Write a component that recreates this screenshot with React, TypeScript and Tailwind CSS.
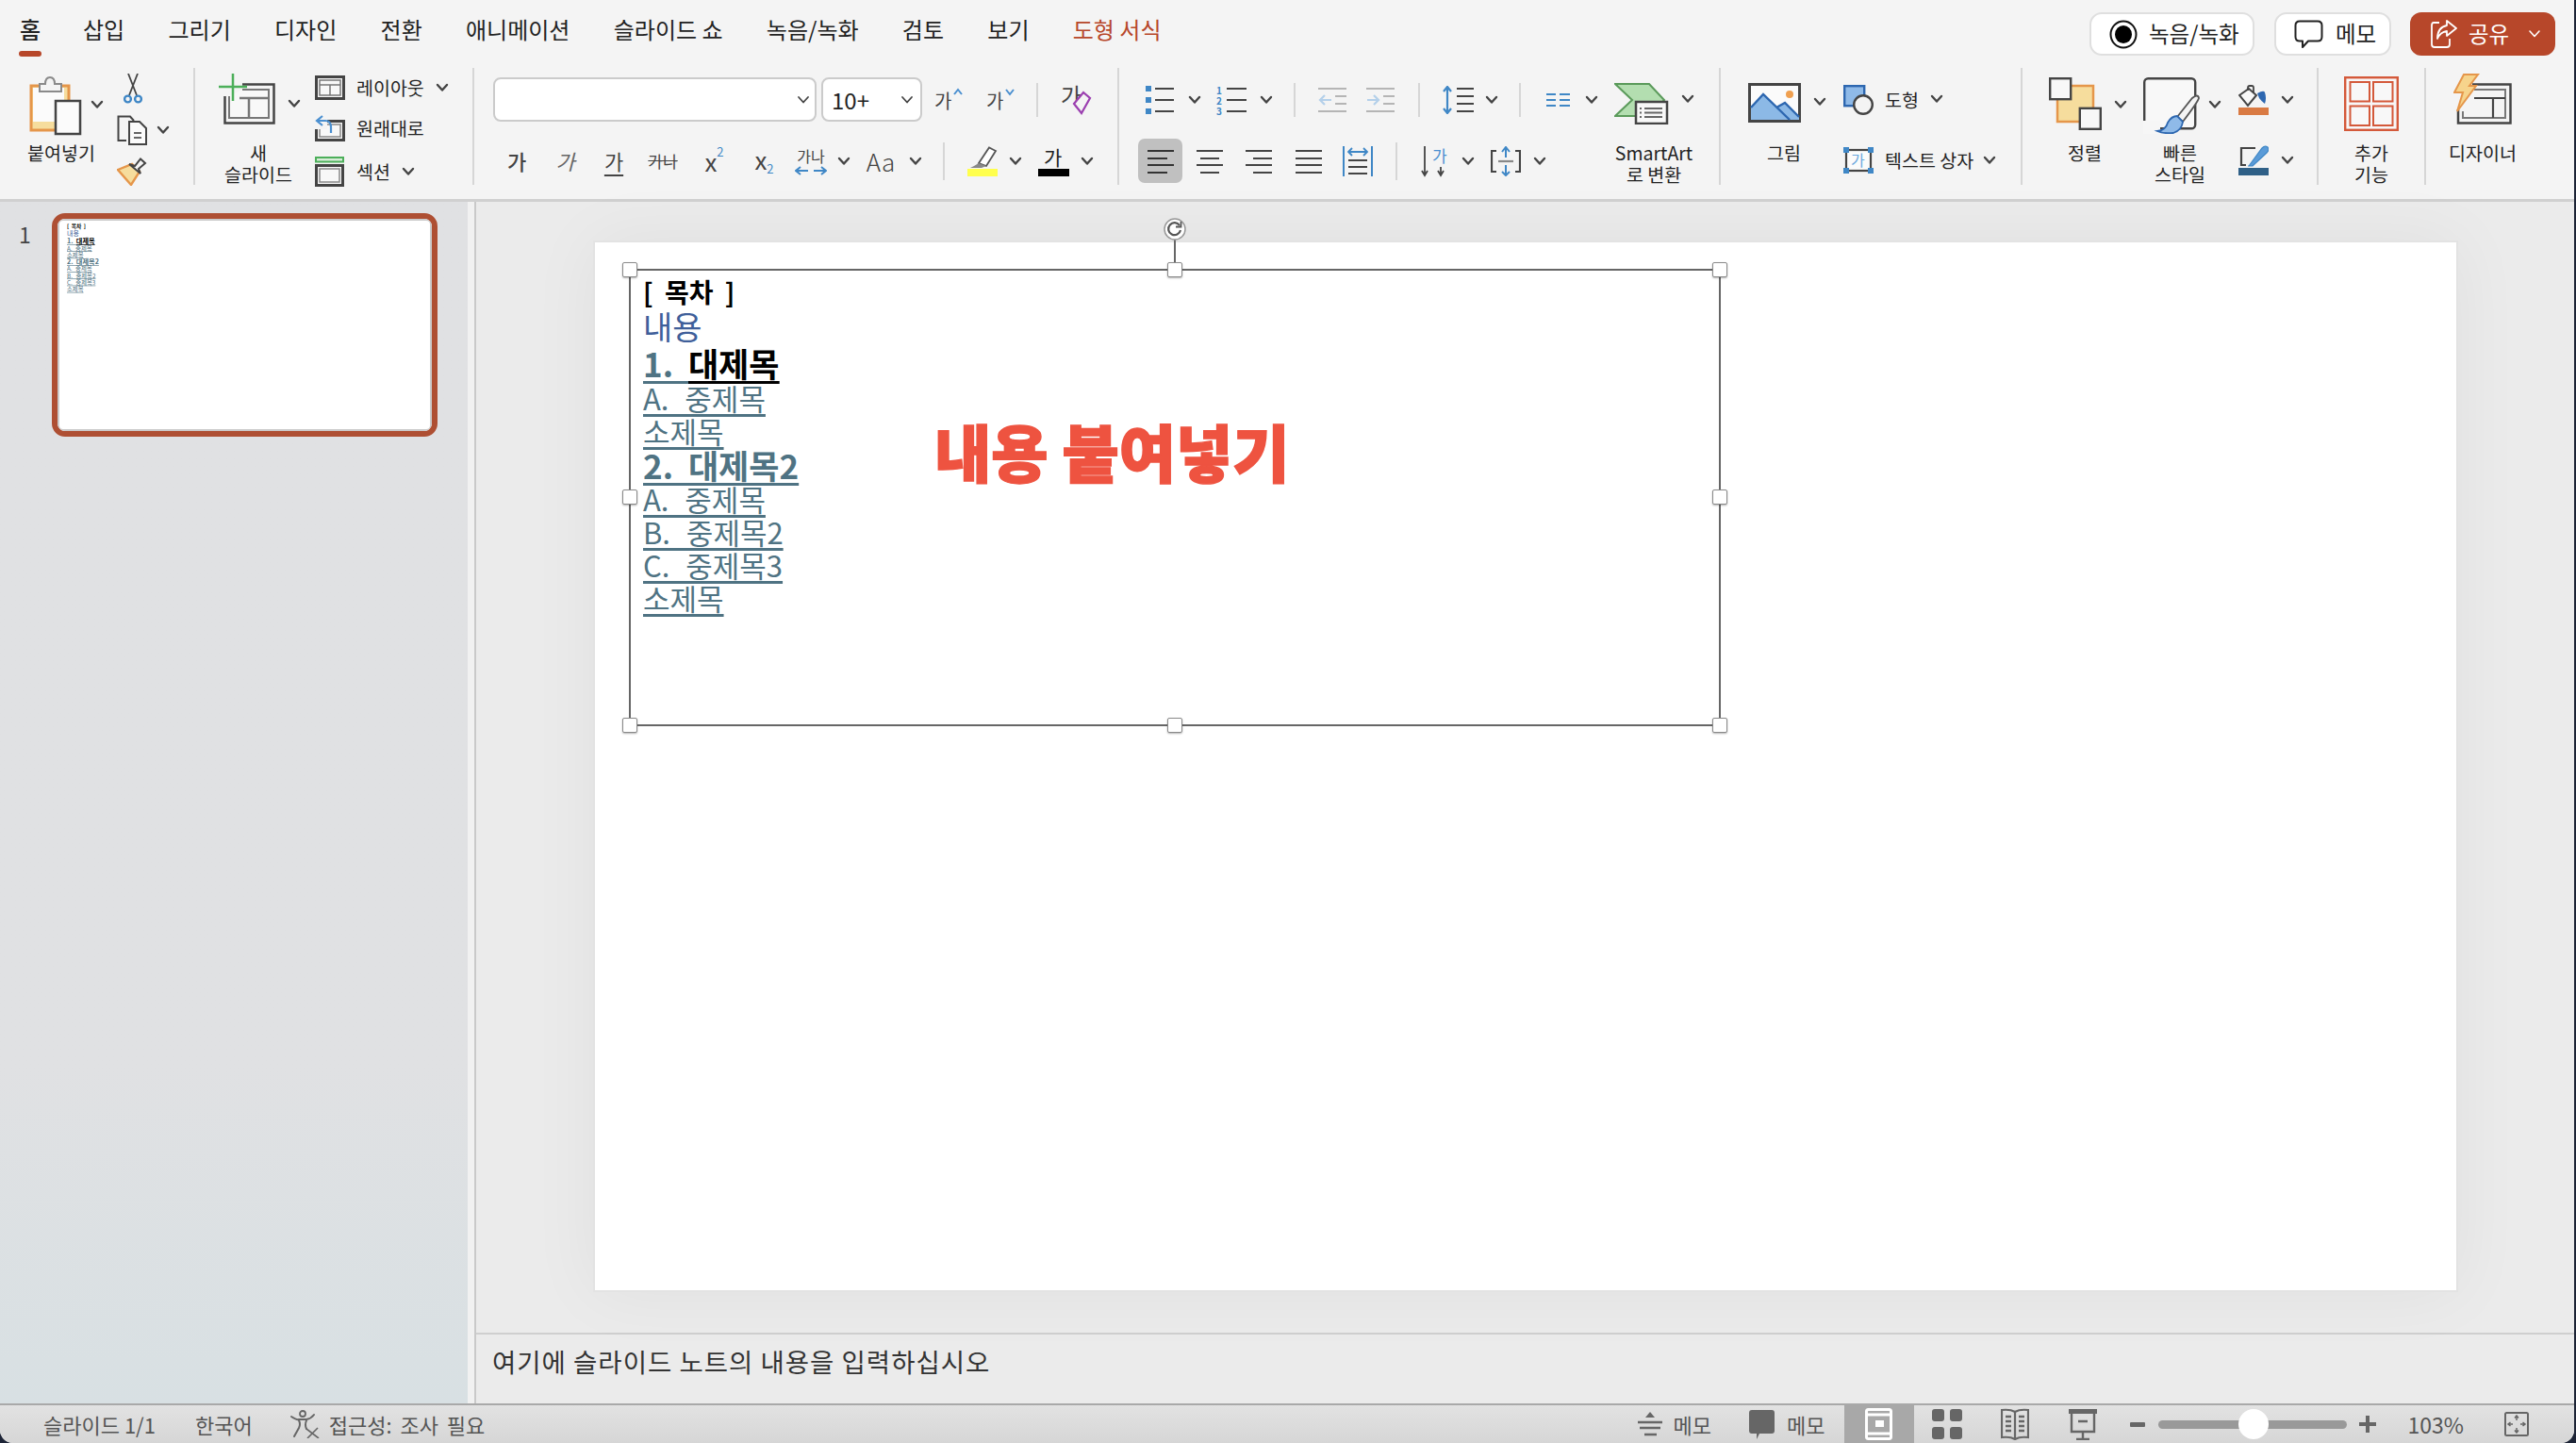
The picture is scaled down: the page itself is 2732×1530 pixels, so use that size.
const tabs = ["삽입", "그리기", "디자인", "전환", "애니메이션", "슬라이드 쇼", "녹음/녹화", "검토", "보기"];

function Chevron({ className = "", color = "#444", w = 2.4 }: { className?: string; color?: string; w?: number }) {
  return (
    <svg width="14" height="10" viewBox="0 0 14 10" className={"shrink-0 " + className}>
      <path d="M2 2 L7 7.5 L12 2" fill="none" stroke={color} strokeWidth={w} strokeLinecap="round" strokeLinejoin="round" />
    </svg>
  );
}

function VLine({ className = "" }: { className?: string }) {
  return <div className={"w-[2px] shrink-0 bg-[#d6d6d6] " + className} />;
}

function PasteIcon() {
  return (
    <svg width="60" height="66" viewBox="0 0 60 66" className="shrink-0">
      <rect x="3" y="13" width="40" height="47" fill="#f6dd9d" stroke="#e5964a" strokeWidth="3" />
      <rect x="5" y="15" width="33" height="36" fill="#fbfbfb" />
      <path d="M12 19V11H18Q18 4 23 4Q28 4 28 11H35V19Z" fill="#f4f4f4" stroke="#8a8a8a" strokeWidth="2" />
      <rect x="29" y="29" width="26" height="35" fill="#fbfbfb" stroke="#444" strokeWidth="2.5" />
    </svg>
  );
}

function ScissorsIcon() {
  return (
    <svg width="20" height="32" viewBox="0 0 20 32" className="shrink-0">
      <path d="M5 0L14 23M15 0L6 23" stroke="#444" strokeWidth="1.8" fill="none" />
      <circle cx="4.5" cy="27" r="3.4" fill="none" stroke="#3f87c6" strokeWidth="2.4" />
      <circle cx="15.5" cy="27" r="3.4" fill="none" stroke="#3f87c6" strokeWidth="2.4" />
    </svg>
  );
}

function CopyIcon() {
  return (
    <svg width="32" height="32" viewBox="0 0 32 32" className="shrink-0">
      <path d="M10 27H1.5V1.5H14L18 6" fill="none" stroke="#444" strokeWidth="2" />
      <path d="M13 7H24L31 14V31H13Z" fill="#fbfbfb" stroke="#444" strokeWidth="2" />
      <path d="M18 19H26M18 24H26" stroke="#666" strokeWidth="1.8" />
    </svg>
  );
}

function PainterIcon() {
  return (
    <svg width="32" height="30" viewBox="0 0 32 30" className="shrink-0">
      <path d="M1 13L16 7L24 15L15 29Z" fill="#f6dd9d" stroke="#e5964a" strokeWidth="2.4" />
      <path d="M13 7L19 9L25 1.5L30 6L23 12L25 17Z" fill="#f4f4f4" stroke="#444" strokeWidth="2" />
    </svg>
  );
}

function NewSlideIcon() {
  return (
    <svg width="60" height="54" viewBox="0 0 60 54" className="shrink-0">
      <path d="M25 11.5H58.5V52.5H6.5V24" fill="none" stroke="#444" strokeWidth="2.5" />
      <path d="M25 17H53V47H11V24" fill="#f8f8f8" stroke="#777" strokeWidth="2" />
      <path d="M22 26H53M32 26V47" stroke="#777" strokeWidth="2.5" fill="none" />
      <path d="M15 0V29M0 14H30" stroke="#4caf5a" strokeWidth="2.5" fill="none" />
    </svg>
  );
}

function LayoutIcon() {
  return (
    <svg width="32" height="26" viewBox="0 0 32 26" className="shrink-0">
      <rect x="1.5" y="1.5" width="29" height="23" fill="#f8f8f8" stroke="#444" strokeWidth="3" />
      <rect x="5" y="5" width="22" height="16" fill="none" stroke="#777" strokeWidth="1.5" />
      <path d="M5 10H27M16 10V21" stroke="#777" strokeWidth="1.5" />
    </svg>
  );
}

function ResetIcon() {
  return (
    <svg width="32" height="28" viewBox="0 0 32 28" className="shrink-0">
      <rect x="1.5" y="6.5" width="29" height="20" fill="#f8f8f8" stroke="#444" strokeWidth="3" />
      <rect x="5" y="10" width="22" height="13" fill="none" stroke="#888" strokeWidth="1.5" />
      <path d="M0 3H13V15H0Z" fill="#f4f4f4" />
      <path d="M8 1L2 6L8 11M2 6H11Q17 6 17 13V19" fill="none" stroke="#4a8fd0" strokeWidth="2.2" />
    </svg>
  );
}

function SectionIcon() {
  return (
    <svg width="32" height="32" viewBox="0 0 32 32" className="shrink-0">
      <rect x="1" y="1" width="29" height="4.5" fill="#d8ecd8" stroke="#4caf5a" strokeWidth="2" />
      <rect x="1.5" y="9.5" width="28" height="21" fill="#f8f8f8" stroke="#444" strokeWidth="3" />
      <rect x="5" y="13" width="21" height="14" fill="none" stroke="#888" strokeWidth="1.5" />
    </svg>
  );
}

function GrowIcon({ up }: { up: boolean }) {
  return (
    <svg width="34" height="30" viewBox="0 0 34 30" className="shrink-0 overflow-visible">
      <text x="1" y="24" fontSize="20" fill="#444">가</text>
      <path d={up ? "M22 9L26 4L30 9" : "M22 4L26 9L30 4"} fill="none" stroke="#4a8fd0" strokeWidth="2" />
    </svg>
  );
}

function ClearIcon() {
  return (
    <svg width="34" height="34" viewBox="0 0 34 34" className="shrink-0 overflow-visible">
      <text x="0" y="22" fontSize="24" fill="#444">가</text>
      <path d="M14 21L24 9L31 15L22 31Z" fill="#f4f4f4" stroke="#9b3fb0" strokeWidth="2.2" />
    </svg>
  );
}

function HighlightIcon() {
  return (
    <svg width="32" height="32" viewBox="0 0 32 32" className="shrink-0">
      <path d="M12 18L23 1.5L30 5L20 21Z" fill="#fff" stroke="#555" strokeWidth="1.8" />
      <path d="M3 23L7 21L12 18L20 21L15 23Z" fill="#888" />
      <rect x="0" y="24" width="32" height="8" fill="#ffff4d" />
    </svg>
  );
}

function FontColorIcon() {
  return (
    <svg width="33" height="32" viewBox="0 0 33 32" className="shrink-0 overflow-visible">
      <text x="6" y="20" fontSize="21" fill="#222">가</text>
      <rect x="0" y="24" width="33" height="8" fill="#000" />
    </svg>
  );
}

function BulletsIcon() {
  return (
    <svg width="30" height="30" viewBox="0 0 30 30" className="shrink-0">
      <rect x="0" y="0" width="6" height="6" fill="#3f87c6" />
      <rect x="0" y="12" width="6" height="6" fill="#3f87c6" />
      <rect x="0" y="24" width="6" height="6" fill="#3f87c6" />
      <path d="M10 3H30M10 15H30M10 27H30" stroke="#444" strokeWidth="2.2" />
    </svg>
  );
}

function NumberingIcon() {
  return (
    <svg width="32" height="32" viewBox="0 0 32 32" className="shrink-0 overflow-visible">
      <text x="0" y="10" fontSize="10" fontWeight="700" fill="#3f87c6">1</text>
      <text x="0" y="21" fontSize="10" fontWeight="700" fill="#3f87c6">2</text>
      <text x="0" y="32" fontSize="10" fontWeight="700" fill="#3f87c6">3</text>
      <path d="M11 4H32M11 16H32M11 28H32" stroke="#444" strokeWidth="2.2" />
    </svg>
  );
}

function IndentIcon({ out }: { out: boolean }) {
  return (
    <svg width="30" height="30" viewBox="0 0 30 30" className="shrink-0">
      <path d="M0 3H30M0 27H30M18 11H30M18 19H30" stroke="#b5b5b5" strokeWidth="2.2" />
      <path d={out ? "M14 15H2M7 10L2 15L7 20" : "M1 15H13M8 10L13 15L8 20"} fill="none" stroke="#b4d0ea" strokeWidth="2.2" />
    </svg>
  );
}

function LineSpacingIcon() {
  return (
    <svg width="33" height="30" viewBox="0 0 33 30" className="shrink-0">
      <path d="M5 2V28M1 6L5 1L9 6M1 24L5 29L9 24" fill="none" stroke="#3f87c6" strokeWidth="2.2" />
      <path d="M15 3H33M15 11H33M15 19H33M15 27H33" stroke="#444" strokeWidth="2.2" />
    </svg>
  );
}

function ColumnsIcon() {
  return (
    <svg width="25" height="14" viewBox="0 0 25 14" className="shrink-0">
      <path d="M0 1H10M14 1H25M0 7H10M14 7H25M0 13H10M14 13H25" stroke="#3f87c6" strokeWidth="2" />
    </svg>
  );
}

function SmartArtIcon() {
  return (
    <svg width="58" height="44" viewBox="0 0 58 44" className="shrink-0">
      <path d="M1 1H37L53 18L37 35H1L19 18Z" fill="#b3deb0" stroke="#5a9a5a" strokeWidth="2" />
      <rect x="23" y="20" width="33" height="23" fill="#f8f8f8" stroke="#444" strokeWidth="2.5" />
      <path d="M27 27H29M27 31.5H29M27 36H29M32 27H51M32 31.5H51M32 36H51" stroke="#666" strokeWidth="1.8" />
    </svg>
  );
}

function AlignIcon({ lines, active }: { lines: string; active?: boolean }) {
  return (
    <svg width="30" height="28" viewBox="0 0 30 28" className="shrink-0">
      <path d={lines} stroke={active ? "#333" : "#444"} strokeWidth="2.2" fill="none" />
    </svg>
  );
}

function DistributedIcon() {
  return (
    <svg width="32" height="32" viewBox="0 0 32 32" className="shrink-0">
      <path d="M1 0V32M31 0V32" stroke="#3f87c6" strokeWidth="2" />
      <path d="M6 6H26M10 2L6 6L10 10M22 2L26 6L22 10" fill="none" stroke="#3f87c6" strokeWidth="1.8" />
      <path d="M6 15H26M6 22H26M6 29H26" stroke="#444" strokeWidth="2.2" />
    </svg>
  );
}

function TextDirIcon() {
  return (
    <svg width="28" height="32" viewBox="0 0 28 32" className="shrink-0 overflow-visible">
      <path d="M3 0V31M0 26L3 31L6 26M20 22V31M17 26L20 31L23 26" fill="none" stroke="#444" strokeWidth="1.8" />
      <text x="11" y="17" fontSize="17" fill="#4a8fd0">가</text>
    </svg>
  );
}

function TextAlignIcon() {
  return (
    <svg width="32" height="32" viewBox="0 0 32 32" className="shrink-0">
      <path d="M6 5H1V27H6M26 5H31V27H26" fill="none" stroke="#444" strokeWidth="2.2" />
      <path d="M8 16H24" stroke="#888" strokeWidth="2.2" />
      <path d="M16 2V12M12 6L16 1L20 6M16 20V31M12 27L16 31L20 27" fill="none" stroke="#3f87c6" strokeWidth="2" />
    </svg>
  );
}

function PictureIcon() {
  return (
    <svg width="56" height="42" viewBox="0 0 56 42" className="shrink-0">
      <rect x="1.5" y="1.5" width="53" height="39" fill="#fbfbfb" stroke="#444" strokeWidth="3" />
      <path d="M3 26L16 12L30 26L39 21L54 36V39H3Z" fill="#8cb9e6" />
      <path d="M3 26L16 12L44 39M30 26L39 21L54 36" fill="none" stroke="#2d67b0" strokeWidth="2.4" />
      <circle cx="44" cy="12" r="4" fill="#f0a050" />
    </svg>
  );
}

function ShapeIcon() {
  return (
    <svg width="32" height="32" viewBox="0 0 32 32" className="shrink-0">
      <rect x="1.2" y="1.2" width="21" height="21" fill="#8fbae8" stroke="#2d67b0" strokeWidth="2.4" />
      <circle cx="21" cy="21" r="9.8" fill="#f4f4f4" stroke="#444" strokeWidth="2.4" />
    </svg>
  );
}

function TextBoxIcon() {
  return (
    <svg width="32" height="28" viewBox="0 0 32 28" className="shrink-0 overflow-visible">
      <rect x="3" y="3" width="26" height="22" fill="#fbfbfb" stroke="#444" strokeWidth="2.2" />
      <text x="8" y="20" fontSize="16" fill="#6aa7dd">가</text>
      <rect x="0" y="0" width="6" height="6" fill="#3f87c6" />
      <rect x="26" y="0" width="6" height="6" fill="#3f87c6" />
      <rect x="0" y="22" width="6" height="6" fill="#3f87c6" />
      <rect x="26" y="22" width="6" height="6" fill="#3f87c6" />
    </svg>
  );
}

function ArrangeIcon() {
  return (
    <svg width="56" height="56" viewBox="0 0 56 56" className="shrink-0">
      <rect x="9" y="9" width="38" height="38" fill="#f6dd9d" stroke="#e5964a" strokeWidth="2.5" />
      <rect x="1.2" y="1.2" width="22" height="22" fill="#f8f8f8" stroke="#444" strokeWidth="2.4" />
      <rect x="32.8" y="32.8" width="22" height="22" fill="#f8f8f8" stroke="#444" strokeWidth="2.4" />
    </svg>
  );
}

function QuickStyleIcon() {
  return (
    <svg width="60" height="60" viewBox="0 0 60 60" className="shrink-0">
      <rect x="1.2" y="1.2" width="54" height="53" rx="4" fill="#f8f8f8" stroke="#444" strokeWidth="2.4" />
      <path d="M0 46H18V60H0Z" fill="#f6f6f6" />
      <path d="M36 42L52 22Q58 17 59 22Q58 26 42 47Z" fill="#f4f4f4" stroke="#555" strokeWidth="1.8" />
      <path d="M15 57Q24 56 26 48Q30 41 36 41L42 47Q41 56 32 59Q22 60 15 57Z" fill="#8fbae8" stroke="#2d67b0" strokeWidth="1.8" />
    </svg>
  );
}

function FillIcon() {
  return (
    <svg width="32" height="32" viewBox="0 0 32 32" className="shrink-0">
      <path d="M1 11L11 4L19 11L10 22Z" fill="#f8f8f8" stroke="#444" strokeWidth="2" />
      <path d="M10 6V3Q10 1 12 1H14Q16 1 16 3V9" fill="none" stroke="#444" strokeWidth="1.8" />
      <path d="M20 9Q27 5 28 8Q30 14 28 20Q24 17 22 14Z" fill="#2d67b0" />
      <rect x="0" y="24" width="32" height="8" fill="#d97a43" />
    </svg>
  );
}

function OutlineIcon() {
  return (
    <svg width="32" height="32" viewBox="0 0 32 32" className="shrink-0">
      <path d="M18 3H3V21H8" fill="none" stroke="#444" strokeWidth="2.2" />
      <path d="M11 22L25 3Q28 0 31 2Q33 5 30 8L15 22H10Z" fill="#5a9bd8" stroke="#3f87c6" strokeWidth="1.2" />
      <rect x="0" y="24" width="32" height="8" fill="#2f6087" />
    </svg>
  );
}

function AddinsIcon() {
  return (
    <svg width="58" height="58" viewBox="0 0 58 58" className="shrink-0">
      <rect x="1.2" y="1.2" width="55.6" height="55.6" fill="#f8f8f8" stroke="#d4593a" strokeWidth="2.4" />
      <rect x="6.5" y="6" width="20.5" height="20.5" fill="none" stroke="#d4593a" strokeWidth="2" />
      <rect x="31" y="6" width="20.5" height="20.5" fill="none" stroke="#d4593a" strokeWidth="2" />
      <rect x="6.5" y="31.5" width="20.5" height="20.5" fill="none" stroke="#d4593a" strokeWidth="2" />
      <rect x="31" y="31.5" width="20.5" height="20.5" fill="none" stroke="#d4593a" strokeWidth="2" />
    </svg>
  );
}

function DesignerIcon() {
  return (
    <svg width="62" height="54" viewBox="0 0 62 54" className="shrink-0">
      <path d="M20 11.5H60.5V52.5H5V38" fill="none" stroke="#444" strokeWidth="2.5" />
      <path d="M22 17H55V47H10V40" fill="none" stroke="#777" strokeWidth="2" />
      <path d="M22 26H55M42 26V47" stroke="#444" strokeWidth="2.2" fill="none" />
      <path d="M11 1H26L17 13H24L4 40L10 20H1Z" fill="#f6d48c" stroke="#e5964a" strokeWidth="2" />
    </svg>
  );
}

function ShareIcon() {
  return (
    <svg width="28" height="30" viewBox="0 0 28 30" className="shrink-0">
      <path d="M9 3H3Q1 3 1 6V26Q1 29 4 29H17Q20 29 20 26V20" fill="none" stroke="#fff" strokeWidth="1.8" />
      <path d="M17 1L27 9L17 17V12Q10 13 7 20Q7 8 17 6Z" fill="#b7472a" stroke="#fff" strokeWidth="1.8" strokeLinejoin="round" />
    </svg>
  );
}

function BubbleIcon() {
  return (
    <svg width="31" height="30" viewBox="0 0 31 30" className="shrink-0">
      <path d="M6 1.5H25Q29.5 1.5 29.5 6V18Q29.5 22.5 25 22.5H15L9 29V22.5H6Q1.5 22.5 1.5 18V6Q1.5 1.5 6 1.5Z" fill="#fff" stroke="#222" strokeWidth="2" strokeLinejoin="round" />
    </svg>
  );
}

function RecordIcon() {
  return (
    <svg width="30" height="31" viewBox="0 0 30 31" className="shrink-0">
      <ellipse cx="15" cy="15.5" rx="13.5" ry="14" fill="#fff" stroke="#111" strokeWidth="2" />
      <ellipse cx="15" cy="15.5" rx="9" ry="9.5" fill="#000" />
    </svg>
  );
}

function AccessIcon() {
  return (
    <svg width="31" height="30" viewBox="0 0 31 30" className="shrink-0">
      <circle cx="13" cy="4" r="3" fill="none" stroke="#666" strokeWidth="1.8" />
      <path d="M1 7Q7 11 9 10H17Q22 9 25 5M9 11Q11 15 9 19L4 28M17 11Q15 16 17 20" fill="none" stroke="#666" strokeWidth="2" strokeLinecap="round" />
      <path d="M17 20L30 30M29 19L18 30" fill="none" stroke="#666" strokeWidth="1.6" />
    </svg>
  );
}

function NotesIcon() {
  return (
    <svg width="26" height="26" viewBox="0 0 26 26" className="shrink-0">
      <path d="M13 0L18 6H8Z" fill="#666" />
      <path d="M0 11H26M2 17H24M7 24H20" stroke="#666" strokeWidth="2.4" />
    </svg>
  );
}

function CommentIcon() {
  return (
    <svg width="27" height="32" viewBox="0 0 27 32" className="shrink-0">
      <path d="M3 1H24Q27 1 27 4V23Q27 26 24 26H11L8 32V26H3Q0 26 0 23V4Q0 1 3 1Z" fill="#666" />
    </svg>
  );
}

function NormalViewIcon() {
  return (
    <svg width="29" height="34" viewBox="0 0 29 34" className="shrink-0">
      <rect x="1.5" y="1.5" width="26" height="31" rx="2" fill="none" stroke="#fff" strokeWidth="3" />
      <path d="M1 7H28M1 27H28" stroke="#fff" strokeWidth="3" />
      <rect x="11" y="13" width="9" height="7" fill="#fff" />
    </svg>
  );
}

function SorterIcon() {
  return (
    <svg width="32" height="32" viewBox="0 0 32 32" className="shrink-0">
      <rect x="0" y="0" width="13" height="13" rx="3" fill="#666" />
      <rect x="19" y="0" width="13" height="13" rx="3" fill="#666" />
      <rect x="0" y="19" width="13" height="13" rx="3" fill="#666" />
      <rect x="19" y="19" width="13" height="13" rx="3" fill="#666" />
    </svg>
  );
}

function ReadingIcon() {
  return (
    <svg width="30" height="34" viewBox="0 0 30 34" className="shrink-0">
      <path d="M15 4Q10 1 1 2V31Q10 30 15 33Q20 30 29 31V2Q20 1 15 4ZM15 4V33" fill="none" stroke="#666" strokeWidth="2.2" />
      <path d="M5 9H11M5 14H11M5 19H11M5 24H11M19 9H25M19 14H25M19 19H25M19 24H25" stroke="#666" strokeWidth="2.4" />
    </svg>
  );
}

function PresentIcon() {
  return (
    <svg width="30" height="34" viewBox="0 0 30 34" className="shrink-0">
      <rect x="0" y="1" width="30" height="5" fill="#666" />
      <path d="M3 6V25H27V6M15 25V32M8 33H22M10 14H20" fill="none" stroke="#666" strokeWidth="2.4" />
    </svg>
  );
}

function FitIcon() {
  return (
    <svg width="26" height="26" viewBox="0 0 26 26" className="shrink-0">
      <rect x="1" y="1" width="24" height="24" rx="1.5" fill="none" stroke="#666" strokeWidth="2" />
      <path d="M13 4V9M11 6.5L13 4L15 6.5M13 17V22M11 19.5L13 22L15 19.5M4 13H9M6.5 11L4 13L6.5 15M17 13H22M19.5 11L22 13L19.5 15" fill="none" stroke="#666" strokeWidth="1.5" />
    </svg>
  );
}

function RotateIcon() {
  return (
    <svg width="24" height="24" viewBox="0 0 24 24" className="block">
      <circle cx="12" cy="12" r="11" fill="#fff" stroke="#999" strokeWidth="1.5" />
      <path d="M17 8A6.5 6.5 0 1 0 18 13" fill="none" stroke="#555" strokeWidth="2.2" />
      <path d="M18.5 4V9.5H13" fill="none" stroke="#555" strokeWidth="1.8" />
    </svg>
  );
}

// one column with big icon on top and label under it
function BigLabel({ children }: { children: React.ReactNode }) {
  return <div className="mt-[-2px] text-center text-[19.5px] leading-[23px] text-[#222]">{children}</div>;
}

function Handle({ className }: { className: string }) {
  return <div className={"absolute h-[16px] w-[16px] rounded-[2px] border border-[#8a8a8a] bg-white shadow-[0_1px_2px_rgba(0,0,0,0.3)] " + className} />;
}

function SlideLines() {
  const line = "underline decoration-[3px] underline-offset-[4px] decoration-[#4f7383] text-[#4f7383] whitespace-pre";
  const sub = "[word-spacing:1.5px] " + line;
  return (
    <div className="flex flex-col items-start">
      <div className="h-[36px] text-[28px] font-bold leading-[36px] text-black whitespace-pre [word-spacing:6px]">[ 목차 ]</div>
      <div className="h-[38px] text-[34px] leading-[38px] text-[#3f5f9a]">내용</div>
      <div className="h-[39px] text-[35px] font-bold leading-[39px] underline decoration-[3px] underline-offset-[4px] decoration-[#4f7383] whitespace-pre text-[#4f7383]">
        {"1.  "}<span className="text-black underline decoration-[3px] underline-offset-[4px] decoration-black">대제목</span>
      </div>
      <div className={"h-[35px] text-[31px] leading-[35px] " + sub}>{"A.  중제목"}</div>
      <div className={"h-[35px] text-[31px] leading-[35px] " + line}>소제목</div>
      <div className={"h-[37px] text-[35px] font-bold leading-[37px] " + line}>{"2.  대제목2"}</div>
      <div className={"h-[35px] text-[31px] leading-[35px] " + sub}>{"A.  중제목"}</div>
      <div className={"h-[36px] text-[31px] leading-[36px] " + sub}>{"B.  중제목2"}</div>
      <div className={"h-[34px] text-[31px] leading-[34px] " + sub}>{"C.  중제목3"}</div>
      <div className={"h-[36px] text-[31px] leading-[36px] " + line}>소제목</div>
    </div>
  );
}

export default function App() {
  return (
    <div className="h-[1530px] w-[2732px] overflow-hidden bg-[#1d2436] font-['Noto_Sans_CJK_KR','Noto_Sans',sans-serif]">
      <div className="flex h-[1530px] w-[2730px] flex-col overflow-hidden rounded-b-[14px] bg-[#f4f4f4]">
        {/* tabs */}
        <div className="relative flex h-[72px] shrink-0 pl-[20px] pt-[13px]">
          <div className="flex flex-col items-center">
            <span className="text-[24px] font-medium leading-[36px] text-[#222]">홈</span>
            <div className="mt-[5px] h-[6px] w-[24px] rounded-full bg-[#b7472a]" />
          </div>
          <div className="ml-[44px] flex gap-[46.3px] text-[24px] leading-[36px] text-[#222]">
            {tabs.map((t) => (
              <span key={t}>{t}</span>
            ))}
            <span className="text-[#b7472a]">도형 서식</span>
          </div>
          <div className="ml-auto flex h-[46px] items-start pr-[20px]">
            <div className="flex h-[46px] w-[175px] items-center gap-[12px] rounded-[13px] border-2 border-[#dfdfdf] bg-white pl-[19px] text-[23.5px] text-[#222]">
              <RecordIcon />
              <span>녹음/녹화</span>
            </div>
            <div className="ml-[21px] flex h-[46px] w-[124px] items-center gap-[13px] rounded-[13px] border-2 border-[#dfdfdf] bg-white pl-[19px] text-[23.5px] text-[#222]">
              <BubbleIcon />
              <span>메모</span>
            </div>
            <div className="ml-[20px] flex h-[46px] w-[154px] items-center rounded-[12px] bg-[#b7472a] pl-[22px] text-[23.5px] text-white">
              <ShareIcon />
              <span className="ml-[12px]">공유</span>
              <Chevron className="ml-[20px]" color="#fff" w={1.6} />
            </div>
          </div>
        </div>

        {/* ribbon */}
        <div className="flex h-[142px] shrink-0 border-b-[3px] border-[#d0d0d0] text-[#222]">
          {/* clipboard */}
          <div className="flex h-[124px] w-[207px] shrink-0 border-r-2 border-[#d6d6d6]">
            <div className="ml-[29px] w-[80px]">
              <div className="flex h-[80px] pt-[6px]">
                <div className="ml-[1px]"><PasteIcon /></div>
                <Chevron className="ml-[6px] mt-[28px]" />
              </div>
              <div className="w-[72px]"><BigLabel>붙여넣기</BigLabel></div>
            </div>
            <div className="ml-[15px] flex flex-col pt-[6px]">
              <div className="ml-[7px]"><ScissorsIcon /></div>
              <div className="mt-[12px] flex items-center"><CopyIcon /><Chevron className="ml-[10px]" /></div>
              <div className="mt-[13px]"><PainterIcon /></div>
            </div>
          </div>

          {/* slides */}
          <div className="flex h-[124px] w-[296px] shrink-0 border-r-2 border-[#d6d6d6]">
            <div className="ml-[25px] w-[85px]">
              <div className="flex h-[80px] pt-[6px]">
                <NewSlideIcon />
                <Chevron className="ml-[13px] mt-[27px]" />
              </div>
              <div className="ml-[2px] w-[80px]"><BigLabel>새<br />슬라이드</BigLabel></div>
            </div>
            <div className="ml-[17px] flex flex-col pt-[8px] text-[19.5px]">
              <div className="flex h-[26px] items-center"><LayoutIcon /><span className="ml-[12px]">레이아웃</span><Chevron className="ml-[12px]" /></div>
              <div className="mt-[16px] flex h-[28px] items-center"><ResetIcon /><span className="ml-[12px]">원래대로</span></div>
              <div className="mt-[16px] flex h-[32px] items-center"><SectionIcon /><span className="ml-[12px]">섹션</span><Chevron className="ml-[12px]" /></div>
            </div>
          </div>

          {/* font */}
          <div className="flex h-[124px] w-[684px] shrink-0 flex-col border-r-2 border-[#d6d6d6] pl-[20px] pt-[10px]">
            <div className="flex h-[47px] items-center">
              <div className="flex h-[47px] w-[343px] items-center justify-end rounded-[8px] border-2 border-[#cbcbcb] bg-white pr-[5px]"><Chevron w={1.8} /></div>
              <div className="ml-[5px] flex h-[47px] w-[107px] items-center justify-between rounded-[8px] border-2 border-[#cbcbcb] bg-white pl-[9px] pr-[7px] text-[24px]">
                <span>10+</span><Chevron w={1.8} />
              </div>
              <div className="ml-[12px]"><GrowIcon up /></div>
              <div className="ml-[21px]"><GrowIcon up={false} /></div>
              <VLine className="ml-[20px] h-[36px]" />
              <div className="ml-[24px]"><ClearIcon /></div>
            </div>
            <div className="mt-[18px] flex h-[47px] items-center text-[#444]">
              <div className="flex w-[50px] justify-center text-[22px] font-medium">가</div>
              <div className="flex w-[53px] justify-center text-[22px] italic text-[#666]">가</div>
              <div className="flex w-[50px] justify-center text-[22px] underline underline-offset-[5px]">가</div>
              <div className="flex w-[54px] justify-center text-[17px] line-through">가나</div>
              <div className="flex w-[55px] justify-center text-[26px] leading-none">x<span className="mt-[-4px] text-[13px] text-[#3f87c6]">2</span></div>
              <div className="flex w-[51px] justify-center text-[26px] leading-none">x<span className="mt-[16px] text-[13px] text-[#3f87c6]">2</span></div>
              <div className="flex w-[48px] flex-col items-center">
                <span className="text-[16px] leading-[20px]">가나</span>
                <svg width="34" height="12" viewBox="0 0 34 12"><path d="M1 6H14M6 2L1 6L6 10M20 6H33M28 2L33 6L28 10" fill="none" stroke="#3f87c6" strokeWidth="2" /></svg>
              </div>
              <div className="flex w-[22px] justify-center"><Chevron /></div>
              <div className="flex w-[56px] justify-center text-[26px] font-light">Aa</div>
              <div className="flex w-[18px] justify-center"><Chevron /></div>
              <VLine className="ml-[20px] h-[40px]" />
              <div className="ml-[24px]"><HighlightIcon /></div>
              <Chevron className="ml-[12px]" />
              <div className="ml-[17px]"><FontColorIcon /></div>
              <Chevron className="ml-[12px]" />
            </div>
          </div>

          {/* paragraph */}
          <div className="flex h-[124px] w-[638px] shrink-0 border-r-2 border-[#d6d6d6]">
            <div className="flex w-[518px] flex-col pt-[10px]">
              <div className="flex h-[47px] items-center pl-[28px]">
                <BulletsIcon />
                <Chevron className="ml-[15px]" />
                <div className="ml-[16px]"><NumberingIcon /></div>
                <Chevron className="ml-[14px]" />
                <VLine className="ml-[22px] h-[36px]" />
                <div className="ml-[24px]"><IndentIcon out /></div>
                <div className="ml-[21px]"><IndentIcon out={false} /></div>
                <VLine className="ml-[25px] h-[36px]" />
                <div className="ml-[24px]"><LineSpacingIcon /></div>
                <Chevron className="ml-[12px]" />
                <VLine className="ml-[22px] h-[36px]" />
                <div className="ml-[27px]"><ColumnsIcon /></div>
                <Chevron className="ml-[16px]" />
              </div>
              <div className="mt-[18px] flex h-[47px] items-center pl-[20px]">
                <div className="flex h-[47px] w-[47px] items-center justify-center rounded-[7px] bg-[#c0c0c0]">
                  <AlignIcon active lines="M1 3H29M1 11H22M1 18H29M1 26H22" />
                </div>
                <div className="ml-[14px]"><AlignIcon lines="M1 3H29M5 11H25M1 18H29M5 26H25" /></div>
                <div className="ml-[22px]"><AlignIcon lines="M1 3H29M9 11H29M1 18H29M9 26H29" /></div>
                <div className="ml-[23px]"><AlignIcon lines="M1 3H29M1 11H29M1 18H29M1 26H29" /></div>
                <div className="ml-[21px]"><DistributedIcon /></div>
                <VLine className="ml-[24px] h-[40px]" />
                <div className="ml-[26px]"><TextDirIcon /></div>
                <Chevron className="ml-[14px]" />
                <div className="ml-[17px]"><TextAlignIcon /></div>
                <Chevron className="ml-[13px]" />
              </div>
            </div>
            <div className="w-[118px]">
              <div className="flex h-[80px] pl-[7px] pt-[16px]">
                <SmartArtIcon />
                <Chevron className="ml-[13px] mt-[12px]" />
              </div>
              <div className="w-[98px]"><BigLabel>SmartArt<br />로 변환</BigLabel></div>
            </div>
          </div>

          {/* insert */}
          <div className="flex h-[124px] w-[320px] shrink-0 border-r-2 border-[#d6d6d6]">
            <div className="w-[130px] pl-[29px]">
              <div className="flex h-[80px] pt-[16px]">
                <PictureIcon />
                <Chevron className="ml-[13px] mt-[15px]" />
              </div>
              <div className="w-[76px]"><BigLabel>그림</BigLabel></div>
            </div>
            <div className="flex flex-col text-[19.5px]">
              <div className="flex h-[50px] items-end">
                <ShapeIcon />
                <span className="mb-[2px] ml-[12px]">도형</span>
                <Chevron className="mb-[12px] ml-[12px]" />
              </div>
              <div className="mt-[34px] flex h-[28px] items-center">
                <TextBoxIcon />
                <span className="ml-[12px]">텍스트 상자</span>
                <Chevron className="ml-[10px]" />
              </div>
            </div>
          </div>

          {/* drawing */}
          <div className="flex h-[124px] w-[314px] shrink-0 border-r-2 border-[#d6d6d6]">
            <div className="w-[100px] pl-[28px]">
              <div className="flex h-[80px] pt-[10px]">
                <ArrangeIcon />
                <Chevron className="ml-[13px] mt-[24px]" />
              </div>
              <div className="w-[76px]"><BigLabel>정렬</BigLabel></div>
            </div>
            <div className="w-[129px] pl-[28px]">
              <div className="flex h-[80px] pt-[10px]">
                <QuickStyleIcon />
                <Chevron className="ml-[9px] mt-[24px]" />
              </div>
              <div className="ml-[-6px] w-[90px]"><BigLabel>빠른<br />스타일</BigLabel></div>
            </div>
            <div className="flex flex-col pt-[18px]">
              <div className="flex h-[32px] items-center"><FillIcon /><Chevron className="ml-[13px]" /></div>
              <div className="mt-[32px] flex h-[32px] items-center"><OutlineIcon /><Chevron className="ml-[13px]" /></div>
            </div>
          </div>

          {/* add-ins */}
          <div className="flex h-[124px] w-[114px] shrink-0 flex-col items-center border-r-2 border-[#d6d6d6]">
            <div className="h-[80px] pt-[9px]"><AddinsIcon /></div>
            <BigLabel>추가<br />기능</BigLabel>
          </div>

          {/* designer */}
          <div className="flex h-[124px] w-[120px] shrink-0 flex-col items-center">
            <div className="h-[80px] pt-[6px]"><DesignerIcon /></div>
            <BigLabel>디자이너</BigLabel>
          </div>
        </div>

        {/* work area */}
        <div className="flex min-h-0 flex-1">
          <div className="h-full w-[496px] shrink-0 bg-linear-to-b from-[#e0e1e3] from-[72%] to-[#d8e0e3] pl-[20px] pt-[12px]">
            <div className="flex items-start">
              <span className="mt-[8px] text-[23px] leading-[28px] text-[#444]">1</span>
              <div className="ml-[22px] h-[237px] w-[409px] overflow-hidden rounded-[14px] border-[6px] border-[#ae4f33] bg-white">
                <div className="h-full overflow-hidden rounded-[6px] border-2 border-[#cbcbcb] pl-[8px] pt-[2px]">
                  <div className="h-[1111px] w-[1974px] origin-top-left scale-[0.205]">
                    <SlideLines />
                  </div>
                </div>
              </div>
            </div>
          </div>
          <div className="h-full w-[9px] shrink-0 border-r-2 border-[#c9c9c9] bg-[#f1f1f1]" />
          <div className="flex min-w-0 flex-1 flex-col bg-[#ebebeb]">
            <div className="flex-1 pl-[124px] pt-[41px]">
              <div className="relative h-[1115px] w-[1978px] border-2 border-[#e3e3e3] bg-white shadow-[0_0_70px_rgba(0,0,0,0.05)]">
                <div className="absolute left-[36px] top-[28px] h-[485px] w-[1158px] border-2 border-[#666]">
                  <div className="pl-[13px] pt-[4px]">
                    <SlideLines />
                  </div>
                  <div className="absolute left-[322px] top-[151px] whitespace-nowrap text-[65.5px] font-black leading-[80px] text-[#ee5340] [-webkit-text-stroke:1.5px_#ee5340]">내용 붙여넣기</div>
                  <div className="absolute left-[576px] top-[-33px] h-[33px] w-[2px] bg-[#666]" />
                  <div className="absolute left-[565px] top-[-56px]"><RotateIcon /></div>
                  <Handle className="left-[-9px] top-[-9px]" />
                  <Handle className="left-[569px] top-[-9px]" />
                  <Handle className="right-[-9px] top-[-9px]" />
                  <Handle className="left-[-9px] top-[232px]" />
                  <Handle className="right-[-9px] top-[232px]" />
                  <Handle className="bottom-[-9px] left-[-9px]" />
                  <Handle className="bottom-[-9px] left-[569px]" />
                  <Handle className="bottom-[-9px] right-[-9px]" />
                </div>
              </div>
            </div>
            <div className="flex h-[75px] shrink-0 items-start border-t-2 border-[#cfcfcf] pl-[17px] pt-[11px] text-[27.5px] leading-[34px] tracking-[1px] text-[#333]">
              여기에 슬라이드 노트의 내용을 입력하십시오
            </div>
          </div>
        </div>

        {/* status bar */}
        <div className="flex h-[42px] shrink-0 items-center border-t-2 border-[#a9a9a9] bg-linear-to-b from-[#e2e2e2] to-[#d6d6d6] pl-[46px] text-[22px] text-[#555]">
          <span>슬라이드 1/1</span>
          <span className="ml-[42px]">한국어</span>
          <div className="ml-[40px]"><AccessIcon /></div>
          <span className="ml-[10px] [word-spacing:4px]">접근성: 조사 필요</span>
          <div className="ml-auto flex h-full items-center pr-[48px]">
            <NotesIcon />
            <span className="ml-[12px]">메모</span>
            <div className="ml-[40px]"><CommentIcon /></div>
            <span className="ml-[13px]">메모</span>
            <div className="ml-[20px] flex h-full w-[74px] items-center justify-center bg-[#a8a8a8]"><NormalViewIcon /></div>
            <div className="ml-[19px]"><SorterIcon /></div>
            <div className="ml-[41px]"><ReadingIcon /></div>
            <div className="ml-[42px]"><PresentIcon /></div>
            <div className="ml-[35px] h-[5px] w-[16px] rounded-[1px] bg-[#666]" />
            <div className="relative ml-[14px] h-[9px] w-[200px] rounded-full bg-[#999]">
              <div className="absolute left-[85px] top-[-12px] h-[32px] w-[32px] rounded-full bg-white" />
            </div>
            <svg width="18" height="18" viewBox="0 0 18 18" className="ml-[13px] shrink-0"><path d="M9 0V18M0 9H18" stroke="#666" strokeWidth="4" /></svg>
            <span className="ml-[34px] text-[23px]">103%</span>
            <div className="ml-[43px]"><FitIcon /></div>
          </div>
        </div>
      </div>
    </div>
  );
}
